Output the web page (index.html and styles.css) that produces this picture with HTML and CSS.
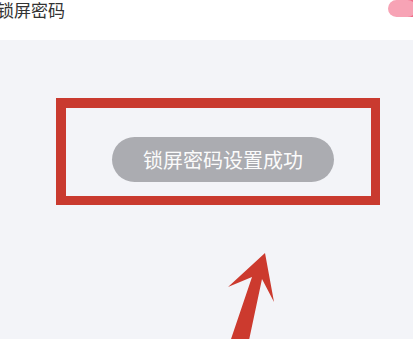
FILE: index.html
```html
<!DOCTYPE html>
<html lang="zh-CN">
<head>
    <meta charset="UTF-8">
    <meta name="viewport" content="width=device-width, initial-scale=1.0">
    <title>锁屏密码</title>
    <link rel="stylesheet" href="styles.css">
</head>
<body>
    <div class="topbar">
        <span class="label">锁屏密码</span>
        <span class="switch"></span>
    </div>
    <div class="main">
        <div class="mark">
            <div class="toast">锁屏密码设置成功</div>
        </div>
    </div>
    <svg class="arrow" width="413" height="339" viewBox="0 0 413 339">
        <polygon points="265,253 274,302 262,279 248,345 229,345 252,277 228,287" fill="#cc3a2e"/>
    </svg>
</body>
</html>
```

FILE: styles.css
```css
body {
    margin: 0;
    background: #f3f4f8;
    font-family: "Noto Sans CJK SC", "Noto Sans", sans-serif;
    overflow: hidden;
    height: 339px;
    position: relative;
}
.topbar {
    background: #fff;
    height: 40px;
    display: flex;
    justify-content: space-between;
    align-items: flex-start;
}
.label {
    font-size: 17px;
    line-height: 19px;
    color: #333;
    margin-left: -3px;
}
.switch {
    width: 32px;
    height: 17px;
    border-radius: 9px;
    background: #f7a3b5;
    margin-right: -7px;
    box-shadow: inset -4px 0 0 #ef6f8b;
}
.main {
    padding: 58px 0 0 56px;
}
.mark {
    width: 305px;
    height: 88px;
    border: 10px solid #c93a2f;
    border-right-width: 9px;
    border-bottom-width: 9px;
    padding: 29px 0 0 46px;
    box-sizing: content-box;
    width: 259px;
    height: 59px;
}
.toast {
    width: 222px;
    height: 45px;
    border-radius: 23px;
    background: #abacb1;
    color: #fbfbfb;
    font-size: 20px;
    line-height: 45px;
    text-align: center;
}
.arrow {
    position: absolute;
    left: 0;
    top: 0;
}
```
